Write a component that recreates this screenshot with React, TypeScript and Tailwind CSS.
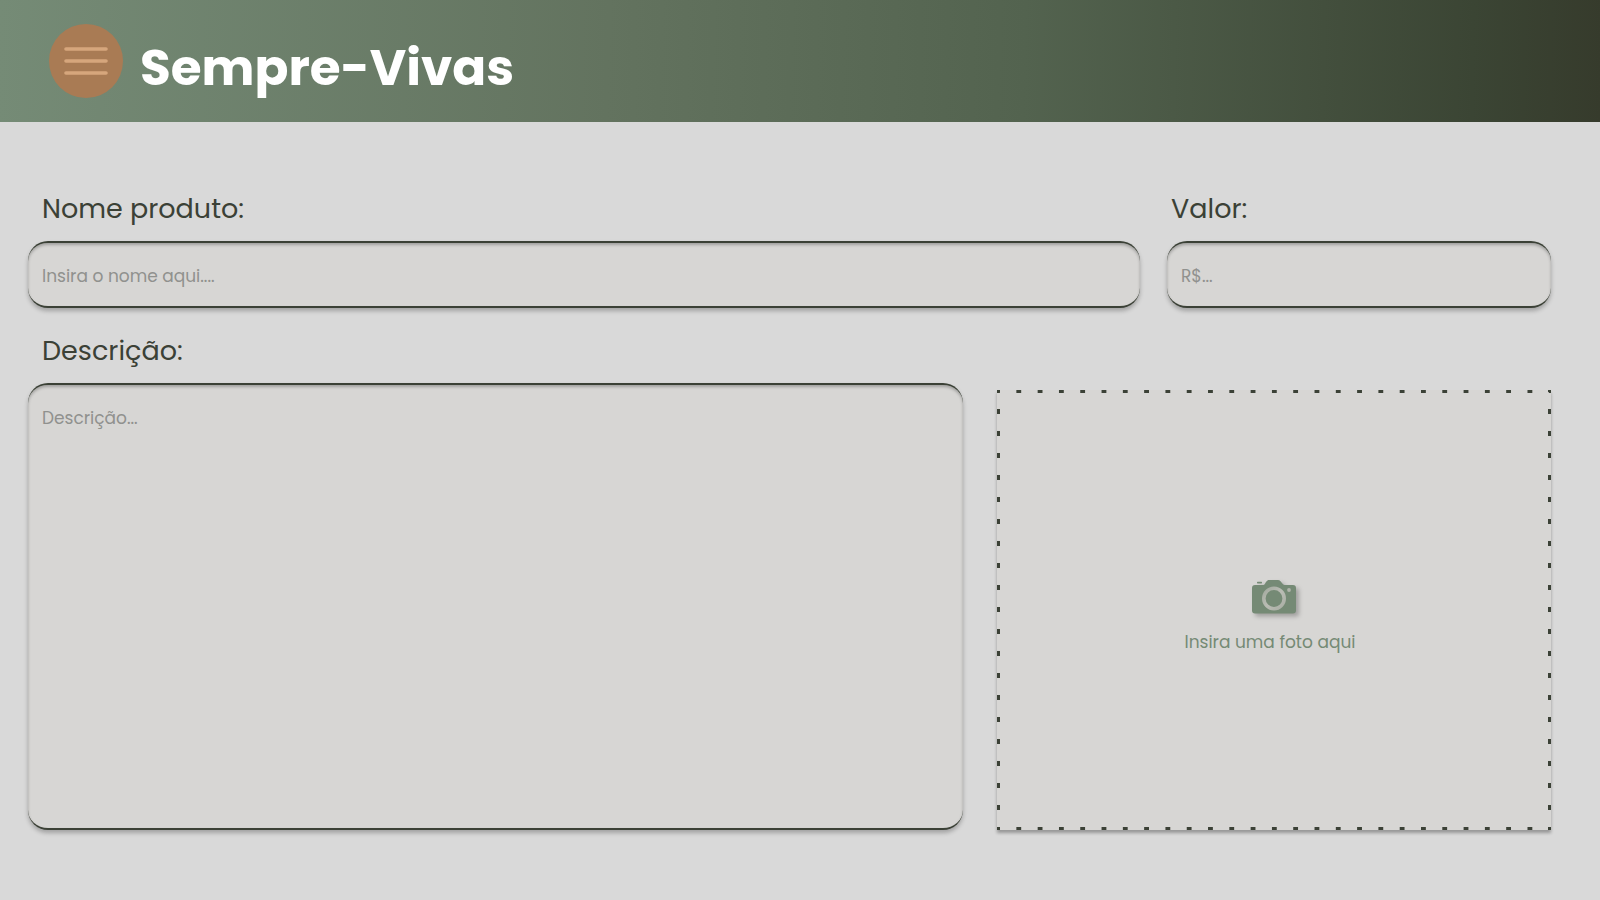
import React from "react";

const fieldClass =
  "block w-full rounded-[20px] border-x-0 border-y-2 border-[#3b4136] bg-[#d7d6d4] pl-3.5 pr-4 text-[17px] leading-6 text-[#3b4136] shadow-[0_3px_4px_rgba(0,0,0,0.25),inset_0_2px_3px_rgba(0,0,0,0.25)] outline-none placeholder:text-[#90918e] placeholder:opacity-100";

const labelClass = "text-[27px] leading-9 text-[#3b4136]";

function MenuIcon() {
  return (
    <svg viewBox="0 0 44 28" className="h-7 w-11" fill="none" stroke="#d6a67c" strokeWidth="3.6" strokeLinecap="round" aria-hidden="true">
      <path d="M2 2H42M2 14H42M2 26H42" />
    </svg>
  );
}

function CameraIcon() {
  return (
    <svg viewBox="0 0 44 34" className="h-[34px] w-11 overflow-visible drop-shadow-[3px_3px_2px_rgba(0,0,0,0.25)]" aria-hidden="true">
      <defs>
        <linearGradient id="lens" x1="0" y1="0" x2="1" y2="1">
          <stop offset="0" stopColor="#a3aa9f" />
          <stop offset="0.5" stopColor="#babcb4" />
          <stop offset="1" stopColor="#a9aea4" />
        </linearGradient>
      </defs>
      <rect x="5" y="1.8" width="5" height="1.6" rx="0.6" fill="#758a75" />
      <path
        d="M3 5H11.5C13 5 13.5 1.5 15.5 0.5C16 0.1 16.500 0 17 0H26C27 0 27.700 0.3 28.300 1L31 4.300C31.500 4.800 32 5 32.600 5H41A3 3 0 0 1 44 8V30.500A3 3 0 0 1 41 33.500H3A3 3 0 0 1 0 30.500V8A3 3 0 0 1 3 5Z"
        fill="#758a75"
      />
      <circle cx="22" cy="18.500" r="10.200" fill="none" stroke="url(#lens)" strokeWidth="3.600" />
      <circle cx="37" cy="10" r="1.900" fill="#b1b5ab" />
    </svg>
  );
}

export default function App() {
  return (
    <div className="min-h-screen bg-[#d9d9d9] font-['Poppins',sans-serif]">
      <header className="flex h-[122px] items-center bg-[linear-gradient(91deg,#758b76_0%,#63735f_38%,#53634f_64%,#3b4534_92%,#363b2c_100%)] pl-[49px]">
        <button type="button" aria-label="Menu" className="flex size-[74px] items-center justify-center rounded-full bg-[#a97b54]">
          <MenuIcon />
        </button>
        <h1 className="pl-[17px] pt-3.5 text-[50px] leading-[72px] font-bold text-white">Sempre-Vivas</h1>
      </header>

      <form className="pl-7 pr-[49px] pt-[69px] pb-16">
        <div className="grid grid-cols-[1112fr_384fr] gap-x-[27px]">
          <div className="flex flex-col gap-3.5">
            <label htmlFor="nome" className={`${labelClass} pl-3.5`}>Nome produto:</label>
            <input id="nome" type="text" placeholder="Insira o nome aqui...." className={`${fieldClass} h-[67px] pt-0.5`} />
          </div>
          <div className="flex flex-col gap-3.5">
            <label htmlFor="valor" className={`${labelClass} pl-1`}>Valor:</label>
            <input id="valor" type="text" placeholder="R$..." className={`${fieldClass} h-[67px] pt-0.5`} />
          </div>
        </div>

        <div className="mt-[25px] grid grid-cols-[935fr_554fr] gap-x-[34px]">
          <div className="flex flex-col gap-3.5">
            <label htmlFor="descricao" className={`${labelClass} pl-3.5`}>Descrição:</label>
            <textarea id="descricao" placeholder="Descrição..." className={`${fieldClass} h-[447px] resize-none pt-[21px]`} />
          </div>
          <label
            htmlFor="foto"
            className="mt-[57px] flex cursor-pointer flex-col items-center justify-center gap-4 bg-[#d7d6d4] bg-[linear-gradient(90deg,#3b4136_3px,transparent_3px,transparent_calc(100%-2px),#3b4136_0),linear-gradient(90deg,#3b4136_3px,transparent_3px,transparent_calc(100%-2px),#3b4136_0),linear-gradient(#3b4136_2px,transparent_2px,transparent_calc(100%-3px),#3b4136_0),linear-gradient(#3b4136_2px,transparent_2px,transparent_calc(100%-3px),#3b4136_0)] [background-position:left_top,left_bottom,left_top,right_top] [background-repeat:round_no-repeat,round_no-repeat,no-repeat_round,no-repeat_round] [background-size:21px_3px,21px_3px,3px_22px,3px_22px] pt-3.5 shadow-[0_3px_3px_rgba(0,0,0,0.3)]"
          >
            <CameraIcon />
            <span className="mr-2 text-[17px] leading-6 text-[#758a75]">Insira uma foto aqui</span>
            <input id="foto" type="file" accept="image/*" className="sr-only" />
          </label>
        </div>
      </form>
    </div>
  );
}
